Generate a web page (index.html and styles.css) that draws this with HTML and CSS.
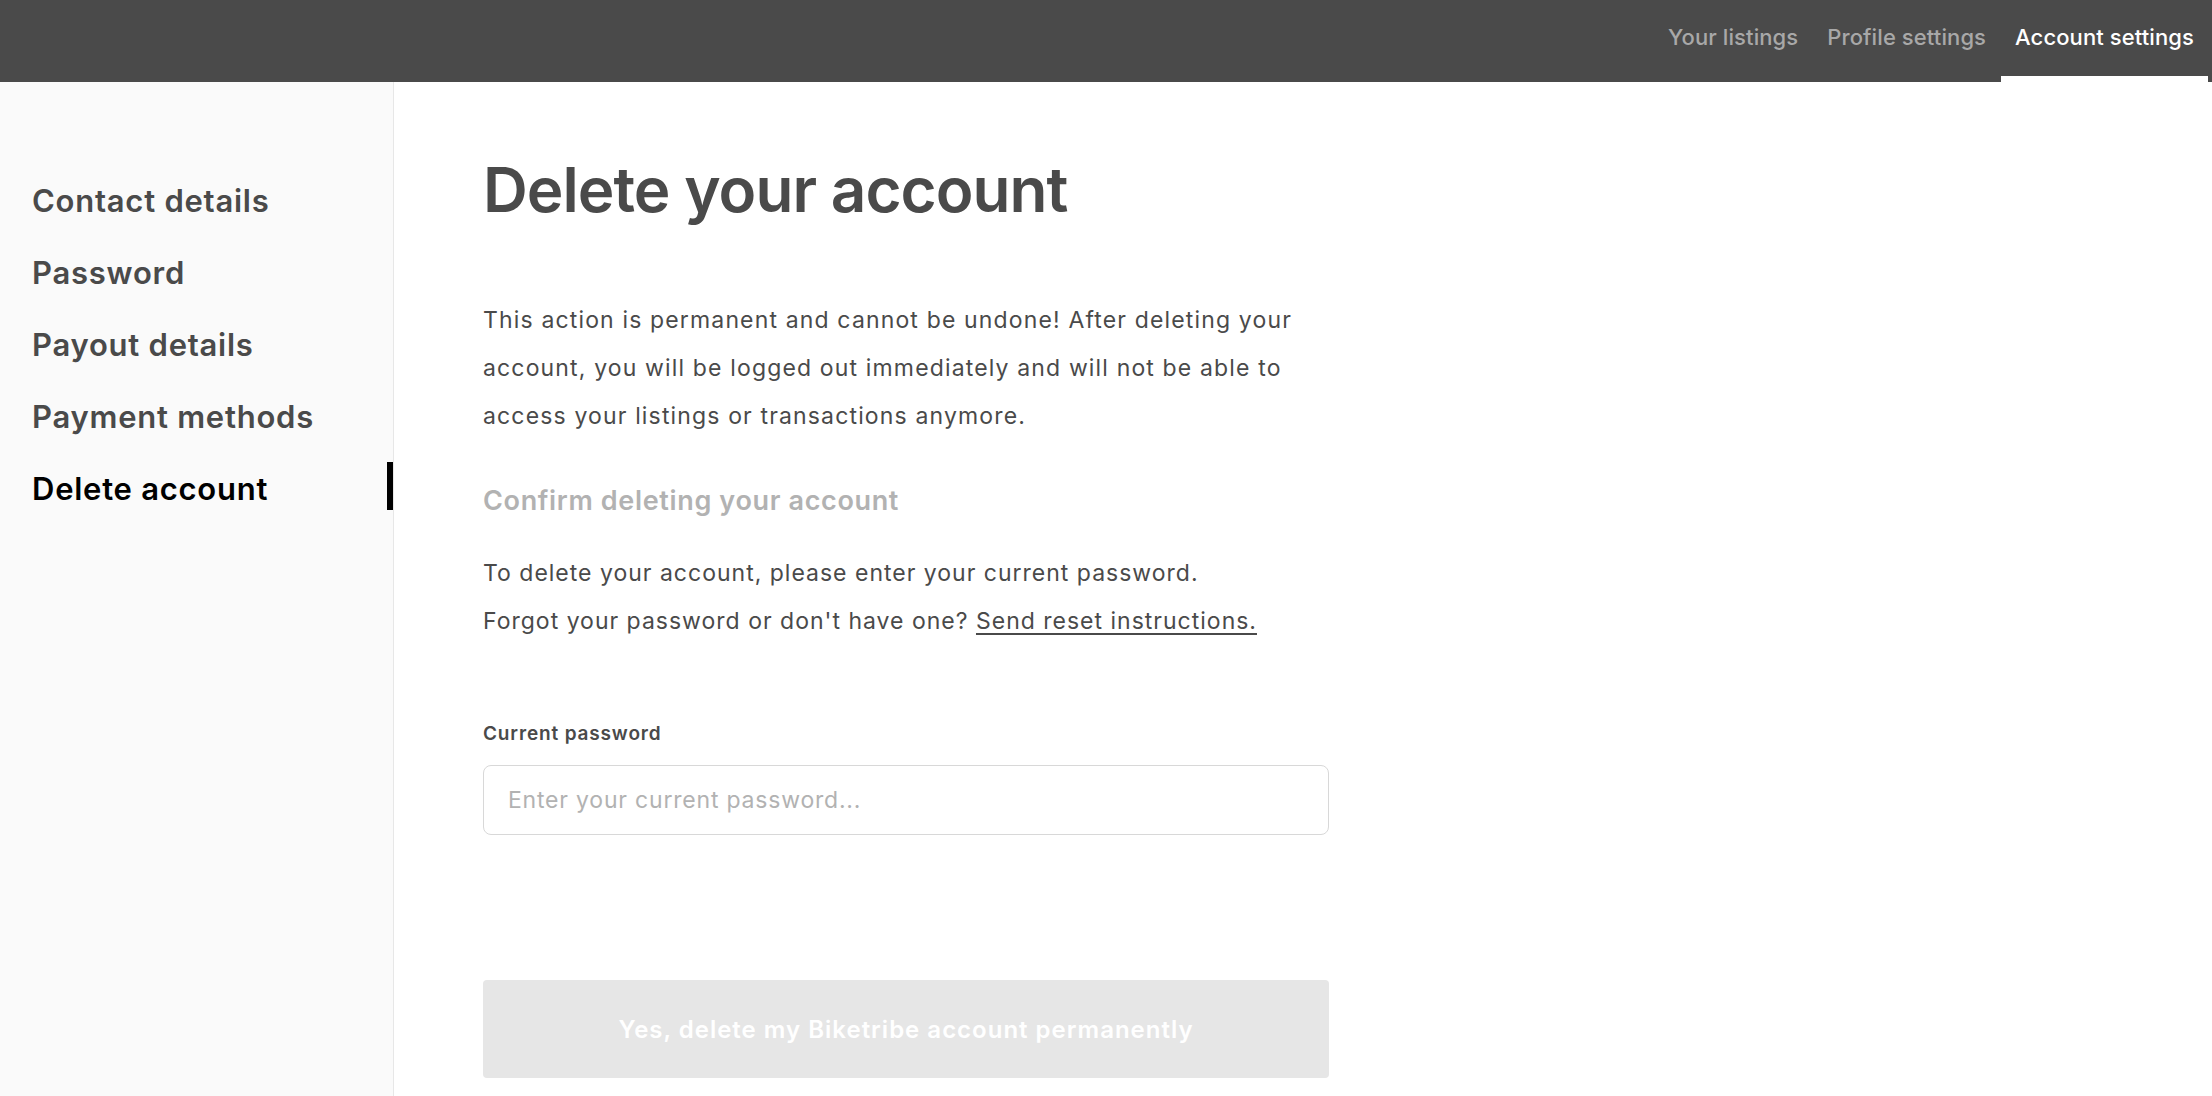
FILE: index.html
```html
<!DOCTYPE html>
<html lang="en">
<head>
<meta charset="utf-8">
<title>Delete your account</title>
<link rel="stylesheet" href="styles.css">
</head>
<body>
<div class="page">
  <header class="topbar">
    <nav class="tabs">
      <a class="tab" href="#">Your listings</a>
      <a class="tab" href="#">Profile settings</a>
      <a class="tab tab-active" href="#">Account settings</a>
    </nav>
  </header>
  <div class="layout">
    <aside class="sidenav">
      <ul class="sidenav-list">
        <li class="sidenav-item">Contact details</li>
        <li class="sidenav-item">Password</li>
        <li class="sidenav-item">Payout details</li>
        <li class="sidenav-item">Payment methods</li>
        <li class="sidenav-item sidenav-item-active">Delete account</li>
      </ul>
    </aside>
    <main class="content">
      <div class="content-inner">
        <h1 class="title">Delete your account</h1>
        <p class="intro">This action is permanent and cannot be undone! After deleting your account, you will be logged out immediately and will not be able to access your listings or transactions anymore.</p>
        <h3 class="subtitle">Confirm deleting your account</h3>
        <p class="instructions">To delete your account, please enter your current password.<br>Forgot your password or don't have one? <a class="reset-link" href="#">Send reset instructions.</a></p>
        <form class="form">
          <label class="label" for="pw">Current password</label>
          <input class="input" id="pw" type="password" placeholder="Enter your current password...">
          <button class="submit" type="button">Yes, delete my Biketribe account permanently</button>
        </form>
      </div>
    </main>
  </div>
</div>
</body>
</html>
```
FILE: styles.css
```css
* { box-sizing: border-box; }
html, body { margin: 0; padding: 0; }
body {
  font-family: Inter, "Open Sans", sans-serif;
  color: #4a4a4a;
  background: #ffffff;
}
.page {
  display: flex;
  flex-direction: column;
  height: 100vh;
  overflow: hidden;
}
.topbar {
  height: 82px;
  flex: 0 0 82px;
  background: #4a4a4a;
  display: flex;
  justify-content: flex-end;
  padding-right: 4px;
}
.tabs {
  display: flex;
  gap: 1px;
}
.tab {
  display: flex;
  align-items: center;
  padding: 0 14px 2px;
  border-bottom: 6px solid transparent;
  font-size: 22px;
  font-weight: 500;
  color: #a8a8a8;
  text-decoration: none;
  letter-spacing: 0.1px;
}
.tab-active {
  color: #ffffff;
  border-bottom-color: #ffffff;
}
.layout {
  flex: 1;
  display: flex;
}
.sidenav {
  width: 394px;
  flex: 0 0 394px;
  background: #fafafa;
  border-right: 1px solid #e7e7e7;
  padding-top: 92px;
}
.sidenav-list {
  list-style: none;
  margin: 0;
  padding: 0;
  display: flex;
  flex-direction: column;
  gap: 24px;
}
.sidenav-item {
  height: 48px;
  line-height: 54px;
  padding-left: 32px;
  font-size: 31px;
  font-weight: 600;
  color: #4a4a4a;
  letter-spacing: 0.75px;
}
.sidenav-item-active {
  color: #000000;
  border-right: 6px solid #000000;
}
.content {
  flex: 1;
  padding: 71px 0 0 89px;
}
.content-inner {
  width: 846px;
}
.title {
  margin: 0;
  font-size: 62px;
  line-height: 74px;
  font-weight: 600;
  letter-spacing: -0.95px;
  color: #4a4a4a;
}
.intro {
  margin: 69px 0 0;
  font-size: 23px;
  line-height: 48px;
  font-weight: 400;
  letter-spacing: 1.15px;
}
.subtitle {
  margin: 45px 0 0;
  font-size: 27px;
  line-height: 32px;
  font-weight: 600;
  letter-spacing: 0.65px;
  color: #b2b2b2;
}
.instructions {
  margin: 32px 0 0;
  font-size: 23px;
  line-height: 48px;
  letter-spacing: 1px;
}
.reset-link {
  color: #4a4a4a;
  text-decoration: underline;
  text-underline-offset: 4px;
}
.form {
  margin-top: 77px;
  display: flex;
  flex-direction: column;
}
.label {
  font-size: 19px;
  line-height: 24px;
  font-weight: 600;
  letter-spacing: 0.85px;
  color: #4a4a4a;
}
.input {
  margin-top: 19px;
  height: 70px;
  width: 846px;
  border: 1px solid #d8d8d8;
  border-radius: 8px;
  padding: 0 24px;
  font-family: inherit;
  font-size: 23px;
  letter-spacing: 0.8px;
  color: #4a4a4a;
  outline: none;
}
.input::placeholder {
  color: #b2b2b2;
}
.submit {
  margin-top: 145px;
  height: 98px;
  width: 846px;
  border: none;
  border-radius: 4px;
  background: #e6e6e6;
  color: #ffffff;
  font-family: inherit;
  font-size: 24px;
  font-weight: 600;
  letter-spacing: 1px;
}
```
